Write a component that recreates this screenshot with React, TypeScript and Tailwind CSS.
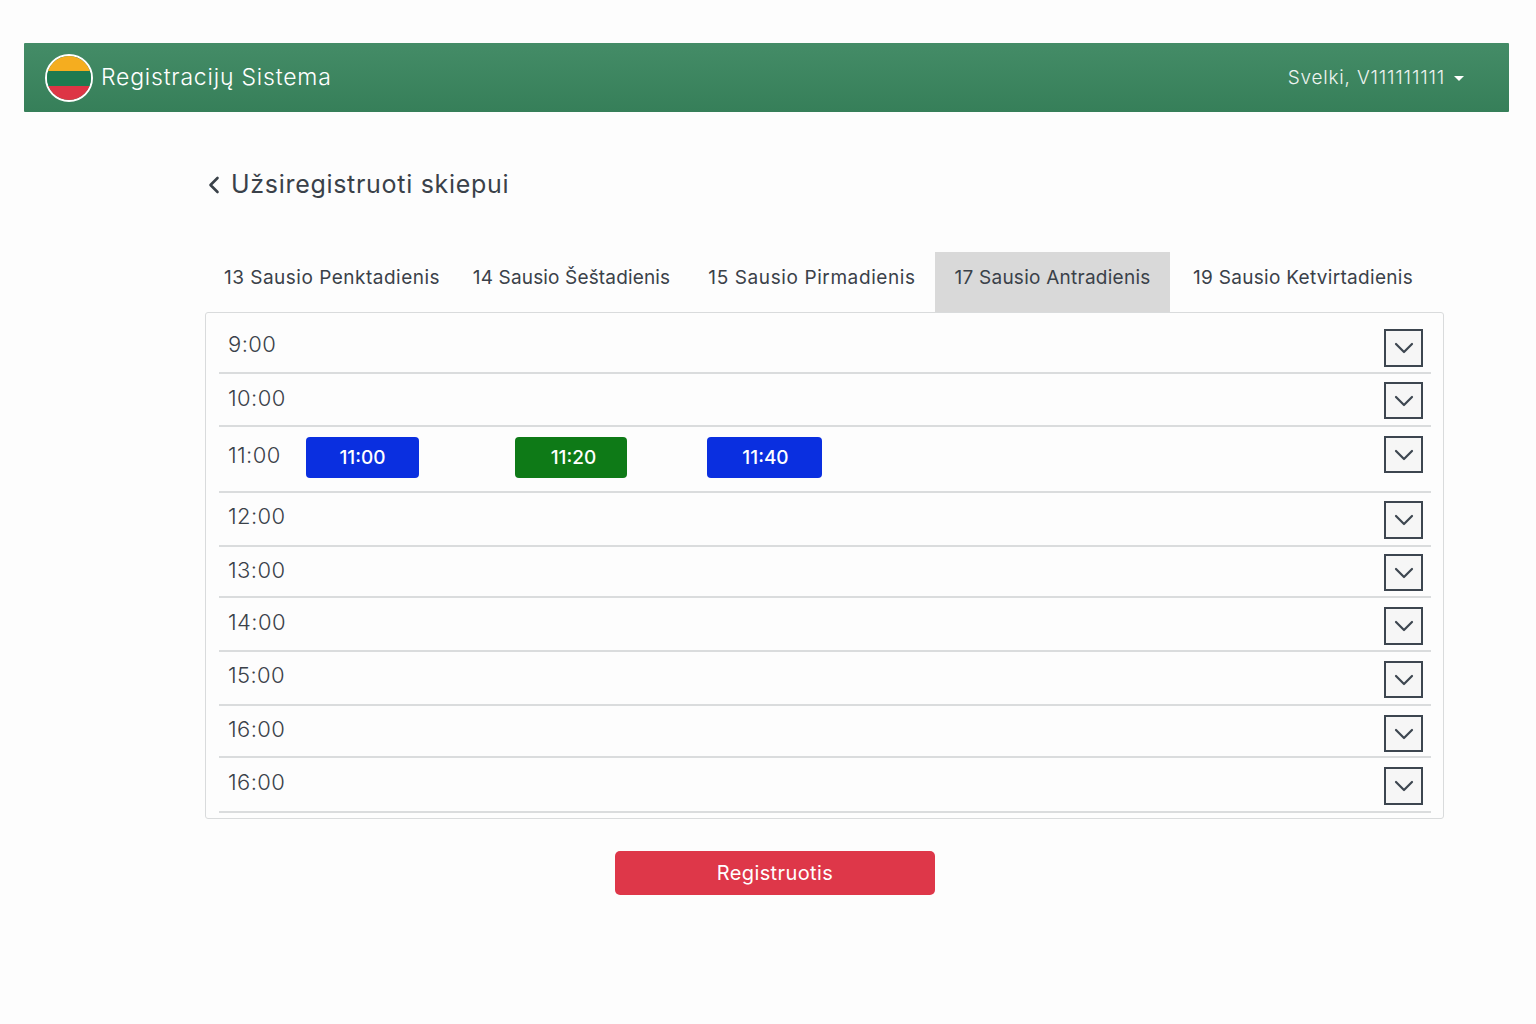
import React from "react";

const tabs = [
  { label: "13 Sausio Penktadienis", cls: "w-[254px] tracking-[0.5px]" },
  { label: "14 Sausio Šeštadienis", cls: "w-[225px] tracking-[0.15px]" },
  { label: "15 Sausio Pirmadienis", cls: "w-[246px] ml-[5px] tracking-[0.6px]" },
  { label: "17 Sausio Antradienis", cls: "w-[235px] bg-[#d9d9d9] tracking-[0.25px]" },
  { label: "19 Sausio Ketvirtadienis", cls: "w-[266px] tracking-[0.3px]" },
];

const rows = [
  { t: "9:00", h: "h-[61px]", tp: "pt-[19px]", bp: "pt-[16px]", bh: "h-[38px]" },
  { t: "10:00", h: "h-[53px]", tp: "pt-[12px]", bp: "pt-[8px]", bh: "h-[37px]" },
  { t: "11:00", h: "h-[66px]", tp: "pt-[16px]", bp: "pt-[9px]", bh: "h-[37px]", slots: true },
  { t: "12:00", h: "h-[54px]", tp: "pt-[11px]", bp: "pt-[8px]", bh: "h-[38px]" },
  { t: "13:00", h: "h-[51px]", tp: "pt-[11px]", bp: "pt-[7px]", bh: "h-[37px]" },
  { t: "14:00", h: "h-[54px]", tp: "pt-[12px]", bp: "pt-[9px]", bh: "h-[38px]" },
  { t: "15:00", h: "h-[54px]", tp: "pt-[11px]", bp: "pt-[9px]", bh: "h-[37px]" },
  { t: "16:00", h: "h-[52px]", tp: "pt-[11px]", bp: "pt-[9px]", bh: "h-[37px]" },
  { t: "16:00", h: "h-[55px]", tp: "pt-[12px]", bp: "pt-[9px]", bh: "h-[38px]" },
];

function Chevron() {
  return (
    <svg width="20" height="12" viewBox="0 0 20 12" fill="none" stroke="#3d4650" strokeWidth="2.2" strokeLinecap="round" strokeLinejoin="round">
      <path d="M2 2l8 8 8-8" />
    </svg>
  );
}

function Flag() {
  return (
    <div className="w-[48px] h-[48px] rounded-full border-2 border-white overflow-hidden flex flex-col shrink-0">
      <div className="h-[15px] bg-[#f5ad1f]" />
      <div className="h-[15px] bg-[#1f7a50]" />
      <div className="flex-1 bg-[#dd3545]" />
    </div>
  );
}

export default function App() {
  return (
    <div className="min-h-[1024px] bg-[#fdfdfd] pt-[43px] pl-[24px] pr-[27px] text-[#3a4149] [font-family:Inter,'Noto_Sans',sans-serif]">
      <header className="h-[69px] rounded-[1px] bg-gradient-to-b from-[#448c67] to-[#367f59] flex items-center pl-[21px] pr-[45px] text-white">
        <Flag />
        <span className="ml-[8px] text-[23px] tracking-[0.8px] font-light">Registracijų Sistema</span>
        <span className="ml-auto mt-[1px] text-[19px] tracking-[0.8px] font-light text-[#eef4f0]">Svelki, V111111111</span>
        <span className="ml-[9px] mt-[1px] w-0 h-0 border-l-[5px] border-r-[5px] border-t-[5px] border-l-transparent border-r-transparent border-t-white" />
      </header>

      <main className="ml-[181px] w-[1239px]">
        <div className="mt-[53px] h-[40px] flex items-center">
          <svg className="ml-[3px]" width="12" height="18" viewBox="0 0 12 18" fill="none" stroke="#3a4149" strokeWidth="2.6" strokeLinecap="round" strokeLinejoin="round">
            <path d="M9.5 2L2.5 9l7 7" />
          </svg>
          <h1 className="ml-[11px] text-[25px] font-normal tracking-[0.7px]">Užsiregistruoti skiepui</h1>
        </div>

        <nav className="mt-[47px] flex h-[60px]">
          {tabs.map((t) => (
            <div key={t.label} className={`${t.cls} flex items-center justify-center pb-[7px] text-[19px] font-normal text-[#3a4149] whitespace-nowrap`}>
              {t.label}
            </div>
          ))}
        </nav>

        <section className="h-[507px] border border-[#d9dbdc] rounded-[3px] pl-[13px] pr-[12px]">
          {rows.map((r, i) => (
            <div key={i} className={`${r.h} flex items-start justify-between border-b-2 border-[#dadcdd] pl-[9px] pr-[8px]`}>
              <div className={`${r.tp} flex items-start`}>
                <span className="w-[78px] text-[22px] tracking-[0.4px] leading-[24px] font-light text-[#3a4149]">{r.t}</span>
                {r.slots && (
                  <div className="flex -mt-[6px] text-[19px] font-medium text-white">
                    <button className="w-[113px] h-[41px] pt-[1px] rounded-[4px] bg-[#0a2fe0]">11:00</button>
                    <button className="ml-[96px] w-[112px] h-[41px] pt-[1px] pl-[5px] rounded-[4px] bg-[#0e7a17]">11:20</button>
                    <button className="ml-[80px] w-[115px] h-[41px] pt-[1px] pl-[2px] rounded-[4px] bg-[#0a2fe0]">11:40</button>
                  </div>
                )}
              </div>
              <div className={r.bp}>
                <div className={`${r.bh} w-[39px] border-2 border-[#3d4650] bg-[#f6f6f6] flex items-center justify-center`}>
                  <Chevron />
                </div>
              </div>
            </div>
          ))}
        </section>

        <div className="mt-[32px] ml-[410px]">
          <button className="w-[320px] h-[44px] rounded-[5px] bg-[#de3749] text-white text-[20px] tracking-[0.4px] font-normal">Registruotis</button>
        </div>
      </main>
    </div>
  );
}
